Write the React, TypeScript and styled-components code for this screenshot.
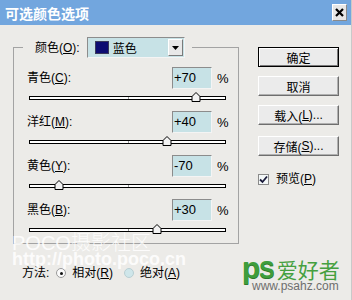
import React from "react";
import styled, { createGlobalStyle } from "styled-components";

const GlobalStyle = createGlobalStyle`
  html, body { margin: 0; padding: 0; }
  body {
    background: #ecebe8;
    font-family: "Liberation Sans", "Noto Sans CJK SC", sans-serif;
    font-size: 12px;
    color: #000;
  }
`;

const CJK = `"Liberation Sans", "Noto Sans CJK SC", sans-serif`;

const Window = styled.div`
  position: relative;
  width: 352px;
  height: 300px;
  overflow: hidden;
  background: #ecebe8;
  display: flex;
  flex-direction: column;
  box-sizing: border-box;
  border-right: 1px solid #c9c9c9;
`;

const TitleBar = styled.div`
  height: 25px;
  flex: none;
  background: #72a6de;
  display: flex;
  align-items: center;
  justify-content: space-between;
  padding: 0 4px 0 5px;
  box-sizing: border-box;
`;

const Title = styled.span`
  color: #fff;
  font-weight: bold;
  font-size: 14px;
  font-family: "Noto Sans CJK SC", sans-serif;
  line-height: 1;
`;

const CloseButton = styled.div`
  width: 15px;
  height: 17px;
  box-sizing: border-box;
  background: #e6e6e6;
  border: 1px solid;
  border-color: #fff #8a8a8a #8a8a8a #fff;
  display: flex;
  align-items: center;
  justify-content: center;
`;

const Body = styled.div`
  flex: 1;
  display: flex;
`;

const LeftCol = styled.div`
  width: 227px;
  padding: 12px 0 0 13px;
  display: flex;
  flex-direction: column;
`;

const Group = styled.fieldset`
  margin: 0;
  width: 226px;
  min-width: 0;
  box-sizing: border-box;
  border: 1px solid #a3a3a3;
  padding: 9px 10px 0 13px;
`;

const Legend = styled.legend`
  margin-left: -4px;
  padding: 0 7px 0 12px;
`;

const LegendInner = styled.div`
  display: flex;
  align-items: center;
  gap: 7px;
`;

const Label = styled.span`
  font-family: ${CJK};
  font-size: 12px;
  line-height: 16px;
  white-space: nowrap;
`;

const Dropdown = styled.div`
  width: 98px;
  height: 21px;
  box-sizing: border-box;
  background: #c7e2e6;
  border: 1px solid;
  border-color: #8c8c8c #f4f4f4 #f4f4f4 #8c8c8c;
  display: flex;
  align-items: center;
  padding-left: 7px;
  gap: 4px;
`;

const Swatch = styled.div<{ $color: string }>`
  width: 14px;
  height: 13px;
  box-sizing: border-box;
  background: ${(p) => p.$color};
  border: 1px solid #3a3a5a;
`;

const DropText = styled.span`
  flex: 1;
  font-family: ${CJK};
  font-size: 12px;
`;

const DropArrow = styled.div`
  width: 15px;
  height: 17px;
  margin-right: 1px;
  box-sizing: border-box;
  background: #e8e8e8;
  border: 1px solid;
  border-color: #fff #7a7a7a #7a7a7a #fff;
  display: flex;
  align-items: center;
  justify-content: center;
`;

const Row = styled.div`
  display: flex;
  flex-direction: column;
`;

const RowHeader = styled.div`
  height: 22px;
  display: flex;
  align-items: center;
  justify-content: space-between;
`;

const ValueWrap = styled.div`
  display: flex;
  align-items: center;
  gap: 5px;
`;

const ValueBox = styled.div`
  width: 40px;
  height: 22px;
  box-sizing: border-box;
  background: #c7e2e6;
  border: 1px solid;
  border-color: #8c8c8c #f4f4f4 #f4f4f4 #8c8c8c;
  font-family: "Liberation Sans", sans-serif;
  font-size: 13px;
  line-height: 20px;
  padding-left: 1px;
`;

const Percent = styled.span`
  font-family: "Liberation Sans", sans-serif;
  font-size: 13px;
  width: 11px;
`;

const SliderBlock = styled.div`
  height: 22px;
  padding-top: 7px;
  box-sizing: border-box;
`;

const Track = styled.div`
  position: relative;
  margin: 0 2px;
  height: 4px;
  box-sizing: border-box;
  border: 1px solid #000;
  background: #fff;
`;

const Tick = styled.div`
  position: absolute;
  left: 50%;
  top: 0;
  bottom: 0;
  width: 1px;
  background: #9a9a9a;
`;

const Thumb = styled.svg`
  position: absolute;
  top: -5px;
  width: 9px;
  height: 10px;
  transform: translateX(-50%);
  overflow: visible;
`;

const MethodRow = styled.div`
  margin-top: 21px;
  padding-left: 9px;
  height: 16px;
  display: flex;
  align-items: center;
`;

const MethodLabel = styled(Label)`
  margin-right: 7px;
`;

const Option = styled.div`
  display: flex;
  align-items: center;
  gap: 6px;
  margin-right: 11px;
`;

const Radio = styled.div<{ $checked?: boolean }>`
  width: 10px;
  height: 10px;
  box-sizing: border-box;
  border-radius: 50%;
  border: 1px solid ${(p) => (p.$checked ? "#9a9a9a" : "#b9cfd3")};
  background: ${(p) => (p.$checked ? "#fafafa" : "#cfe6ea")};
  display: flex;
  align-items: center;
  justify-content: center;
  &::after {
    content: "";
    width: 3px;
    height: 3px;
    border-radius: 50%;
    background: #111;
    display: ${(p) => (p.$checked ? "block" : "none")};
  }
`;

const RightCol = styled.div`
  flex: 1;
  padding: 22px 0 0 18px;
  display: flex;
  flex-direction: column;
`;

const Button = styled.div<{ $default?: boolean; $gap?: number }>`
  width: 81px;
  height: 20px;
  margin-top: ${(p) => p.$gap ?? 0}px;
  box-sizing: border-box;
  background: #ebebeb;
  border: 1px solid;
  border-color: ${(p) => (p.$default ? "#000" : "#fff #6e6e6e #6e6e6e #fff")};
  box-shadow: ${(p) =>
    p.$default
      ? "inset 1px 1px 0 #fff, inset -1px -1px 0 #7a7a7a"
      : "inset -1px -1px 0 #b0b0b0"};
  display: flex;
  align-items: center;
  justify-content: center;
  font-family: ${CJK};
  font-size: 12px;
`;

const CheckRow = styled.div`
  margin-top: 15px;
  display: flex;
  align-items: center;
  gap: 7px;
`;

const CheckBox = styled.div`
  width: 11px;
  height: 11px;
  box-sizing: border-box;
  border: 1px solid #8a8a8a;
  background: #f4f8f8;
  display: flex;
  align-items: center;
  justify-content: center;
`;

const PocoMark = styled.div`
  position: absolute;
  left: 12px;
  top: 234px;
  display: flex;
  flex-direction: column;
  color: rgba(255, 255, 255, 0.85);
  pointer-events: none;
`;

const PocoTitle = styled.span`
  font-family: "Liberation Sans", "Noto Sans CJK SC", sans-serif;
  font-size: 20px;
  line-height: 19px;
  font-weight: 300;
`;

const PocoUrl = styled.span`
  font-family: "Liberation Sans", sans-serif;
  font-size: 18px;
  line-height: 13px;
  font-weight: bold;
`;

const PsMark = styled.div`
  position: absolute;
  left: 242px;
  top: 254px;
  display: flex;
  flex-direction: column;
  pointer-events: none;
`;

const PsTop = styled.div`
  display: flex;
  align-items: baseline;
  height: 28px;
`;

const PsLetters = styled.span`
  font-family: "Liberation Sans", sans-serif;
  font-weight: bold;
  color: #3f9d3c;
  line-height: 28px;
  letter-spacing: -1px;
  text-shadow: 0 1px 0 #2d7a2b;
`;

const PsBig = styled.span`
  font-size: 30px;
`;

const PsS = styled.span`
  font-size: 23px;
`;

const PsName = styled.span`
  font-family: "Noto Sans CJK SC", sans-serif;
  color: #45a040;
  font-size: 21px;
  line-height: 28px;
  margin-left: 3px;
`;

const PsUrl = styled.span`
  font-family: "Liberation Sans", sans-serif;
  color: #6e6e6e;
  font-size: 12px;
  line-height: 12px;
  margin-left: 10px;
  margin-top: -2px;
`;

type Channel = { name: string; key: string; value: number };

const channels: Channel[] = [
  { name: "青色", key: "C", value: 70 },
  { name: "洋红", key: "M", value: 40 },
  { name: "黄色", key: "Y", value: -70 },
  { name: "黑色", key: "B", value: 30 },
];

const fmt = (v: number) => (v > 0 ? `+${v}` : `${v}`);

function Slider({ value }: { value: number }) {
  const pct = ((value + 100) / 200) * 100;
  return (
    <SliderBlock>
      <Track>
        <Tick />
        <Thumb style={{ left: `${pct}%` }} viewBox="0 0 9 10">
          <polygon
            points="0.5,4.5 4.5,0.5 8.5,4.5 8.5,9.5 0.5,9.5"
            fill="#f2f2f2"
            stroke="#000"
            strokeWidth="1"
          />
        </Thumb>
      </Track>
    </SliderBlock>
  );
}

function Accel({ k }: { k: string }) {
  return (
    <>
      (<u>{k}</u>)
    </>
  );
}

export default function App() {
  return (
    <>
      <GlobalStyle />
      <Window>
        <TitleBar>
          <Title>可选颜色选项</Title>
          <CloseButton>
            <svg width="9" height="9" viewBox="0 0 9 9">
              <path d="M1 1 L8 8 M8 1 L1 8" stroke="#000" strokeWidth="2.2" />
            </svg>
          </CloseButton>
        </TitleBar>
        <Body>
          <LeftCol>
            <Group>
              <Legend>
                <LegendInner>
                  <Label>
                    颜色<Accel k="O" />:
                  </Label>
                  <Dropdown>
                    <Swatch $color="#0c0c72" />
                    <DropText>蓝色</DropText>
                    <DropArrow>
                      <svg width="7" height="4" viewBox="0 0 7 4">
                        <polygon points="0,0 7,0 3.5,4" fill="#000" />
                      </svg>
                    </DropArrow>
                  </Dropdown>
                </LegendInner>
              </Legend>
              {channels.map((c) => (
                <Row key={c.key}>
                  <RowHeader>
                    <Label>
                      {c.name}
                      <Accel k={c.key} />:
                    </Label>
                    <ValueWrap>
                      <ValueBox>{fmt(c.value)}</ValueBox>
                      <Percent>%</Percent>
                    </ValueWrap>
                  </RowHeader>
                  <Slider value={c.value} />
                </Row>
              ))}
            </Group>
            <MethodRow>
              <MethodLabel>方法:</MethodLabel>
              <Option>
                <Radio $checked />
                <Label>
                  相对<Accel k="R" />
                </Label>
              </Option>
              <Option>
                <Radio />
                <Label>
                  绝对<Accel k="A" />
                </Label>
              </Option>
            </MethodRow>
          </LeftCol>
          <RightCol>
            <Button $default>确定</Button>
            <Button $gap={9}>取消</Button>
            <Button $gap={9}>
              载入<Accel k="L" />...
            </Button>
            <Button $gap={11}>
              存储<Accel k="S" />...
            </Button>
            <CheckRow>
              <CheckBox>
                <svg width="9" height="9" viewBox="0 0 9 9">
                  <path d="M1 4.5 L3.5 7 L8 1.5" fill="none" stroke="#1a1a3a" strokeWidth="1.8" />
                </svg>
              </CheckBox>
              <Label>
                预览<Accel k="P" />
              </Label>
            </CheckRow>
          </RightCol>
        </Body>
        <PocoMark>
          <PocoTitle>POCO摄影社区</PocoTitle>
          <PocoUrl>http://photo.poco.cn</PocoUrl>
        </PocoMark>
        <PsMark>
          <PsTop>
            <PsLetters>
              <PsBig>p</PsBig>
              <PsS>S</PsS>
            </PsLetters>
            <PsName>爱好者</PsName>
          </PsTop>
          <PsUrl>www.psahz.com</PsUrl>
        </PsMark>
      </Window>
    </>
  );
}
